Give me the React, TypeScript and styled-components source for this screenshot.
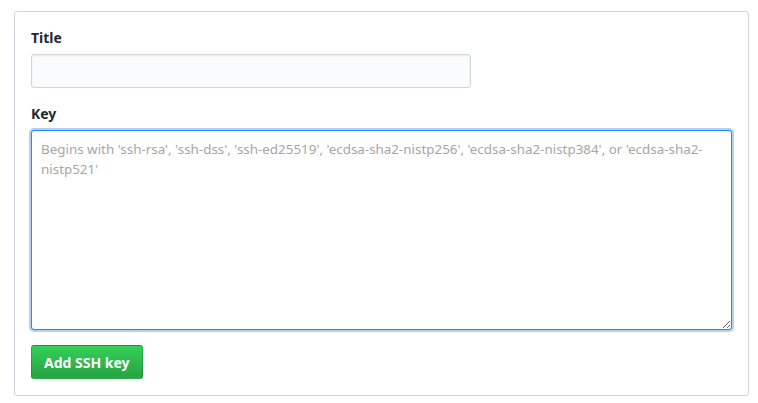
import React from 'react';
import styled, { createGlobalStyle } from 'styled-components';

const GlobalStyle = createGlobalStyle`
  html, body {
    margin: 0;
    padding: 0;
    background: #fff;
  }
  body {
    font-family: "Noto Sans", "Liberation Sans", sans-serif;
    font-size: 14px;
    color: #24292e;
  }
`;

const Page = styled.div`
  padding: 11px 9px 8px 14px;
`;

const Panel = styled.form`
  display: flex;
  flex-direction: column;
  align-items: flex-start;
  border: 1px solid #d1d5da;
  border-radius: 3px;
  padding: 16px;
`;

const Group = styled.div<{ $stretch?: boolean }>`
  display: flex;
  flex-direction: column;
  align-self: ${(p) => (p.$stretch ? 'stretch' : 'flex-start')};
  margin-bottom: 16px;
`;

const Label = styled.label`
  font-weight: 700;
  font-size: 14px;
  line-height: 20px;
  margin-bottom: 6px;
`;

const TextInput = styled.input`
  box-sizing: border-box;
  width: 440px;
  height: 34px;
  padding: 6px 8px;
  font: inherit;
  background: #fafbfc;
  border: 1px solid #d1d5da;
  border-radius: 3px;
  box-shadow: inset 0 1px 2px rgba(27, 31, 35, 0.075);
  outline: none;
`;

const KeyArea = styled.textarea`
  box-sizing: border-box;
  width: 100%;
  height: 200px;
  padding: 8px 9px;
  font: inherit;
  font-size: 13.4px;
  line-height: 20px;
  color: #24292e;
  background: #fff;
  border: 1px solid #2188ff;
  border-radius: 3px;
  box-shadow: 0 0 0 2px rgba(3, 102, 214, 0.3);
  outline: none;
  margin-bottom: -1px;

  &::placeholder {
    color: #a6a6a6;
  }
`;

const SubmitButton = styled.button`
  box-sizing: border-box;
  height: 34px;
  padding: 0 12px;
  font: inherit;
  font-weight: 700;
  color: #fff;
  background: linear-gradient(-180deg, #34d058 0%, #28a745 90%);
  border: 1px solid rgba(27, 31, 35, 0.2);
  border-radius: 3px;
  cursor: pointer;
`;

export default function App() {
  return (
    <Page>
      <GlobalStyle />
      <Panel onSubmit={(e) => e.preventDefault()}>
        <Group>
          <Label htmlFor="ssh-title">Title</Label>
          <TextInput id="ssh-title" type="text" />
        </Group>
        <Group $stretch>
          <Label htmlFor="ssh-key">Key</Label>
          <KeyArea
            id="ssh-key"
            autoFocus
            placeholder="Begins with 'ssh-rsa', 'ssh-dss', 'ssh-ed25519', 'ecdsa-sha2-nistp256', 'ecdsa-sha2-nistp384', or 'ecdsa-sha2-nistp521'"
          />
        </Group>
        <SubmitButton type="submit">Add SSH key</SubmitButton>
      </Panel>
    </Page>
  );
}
